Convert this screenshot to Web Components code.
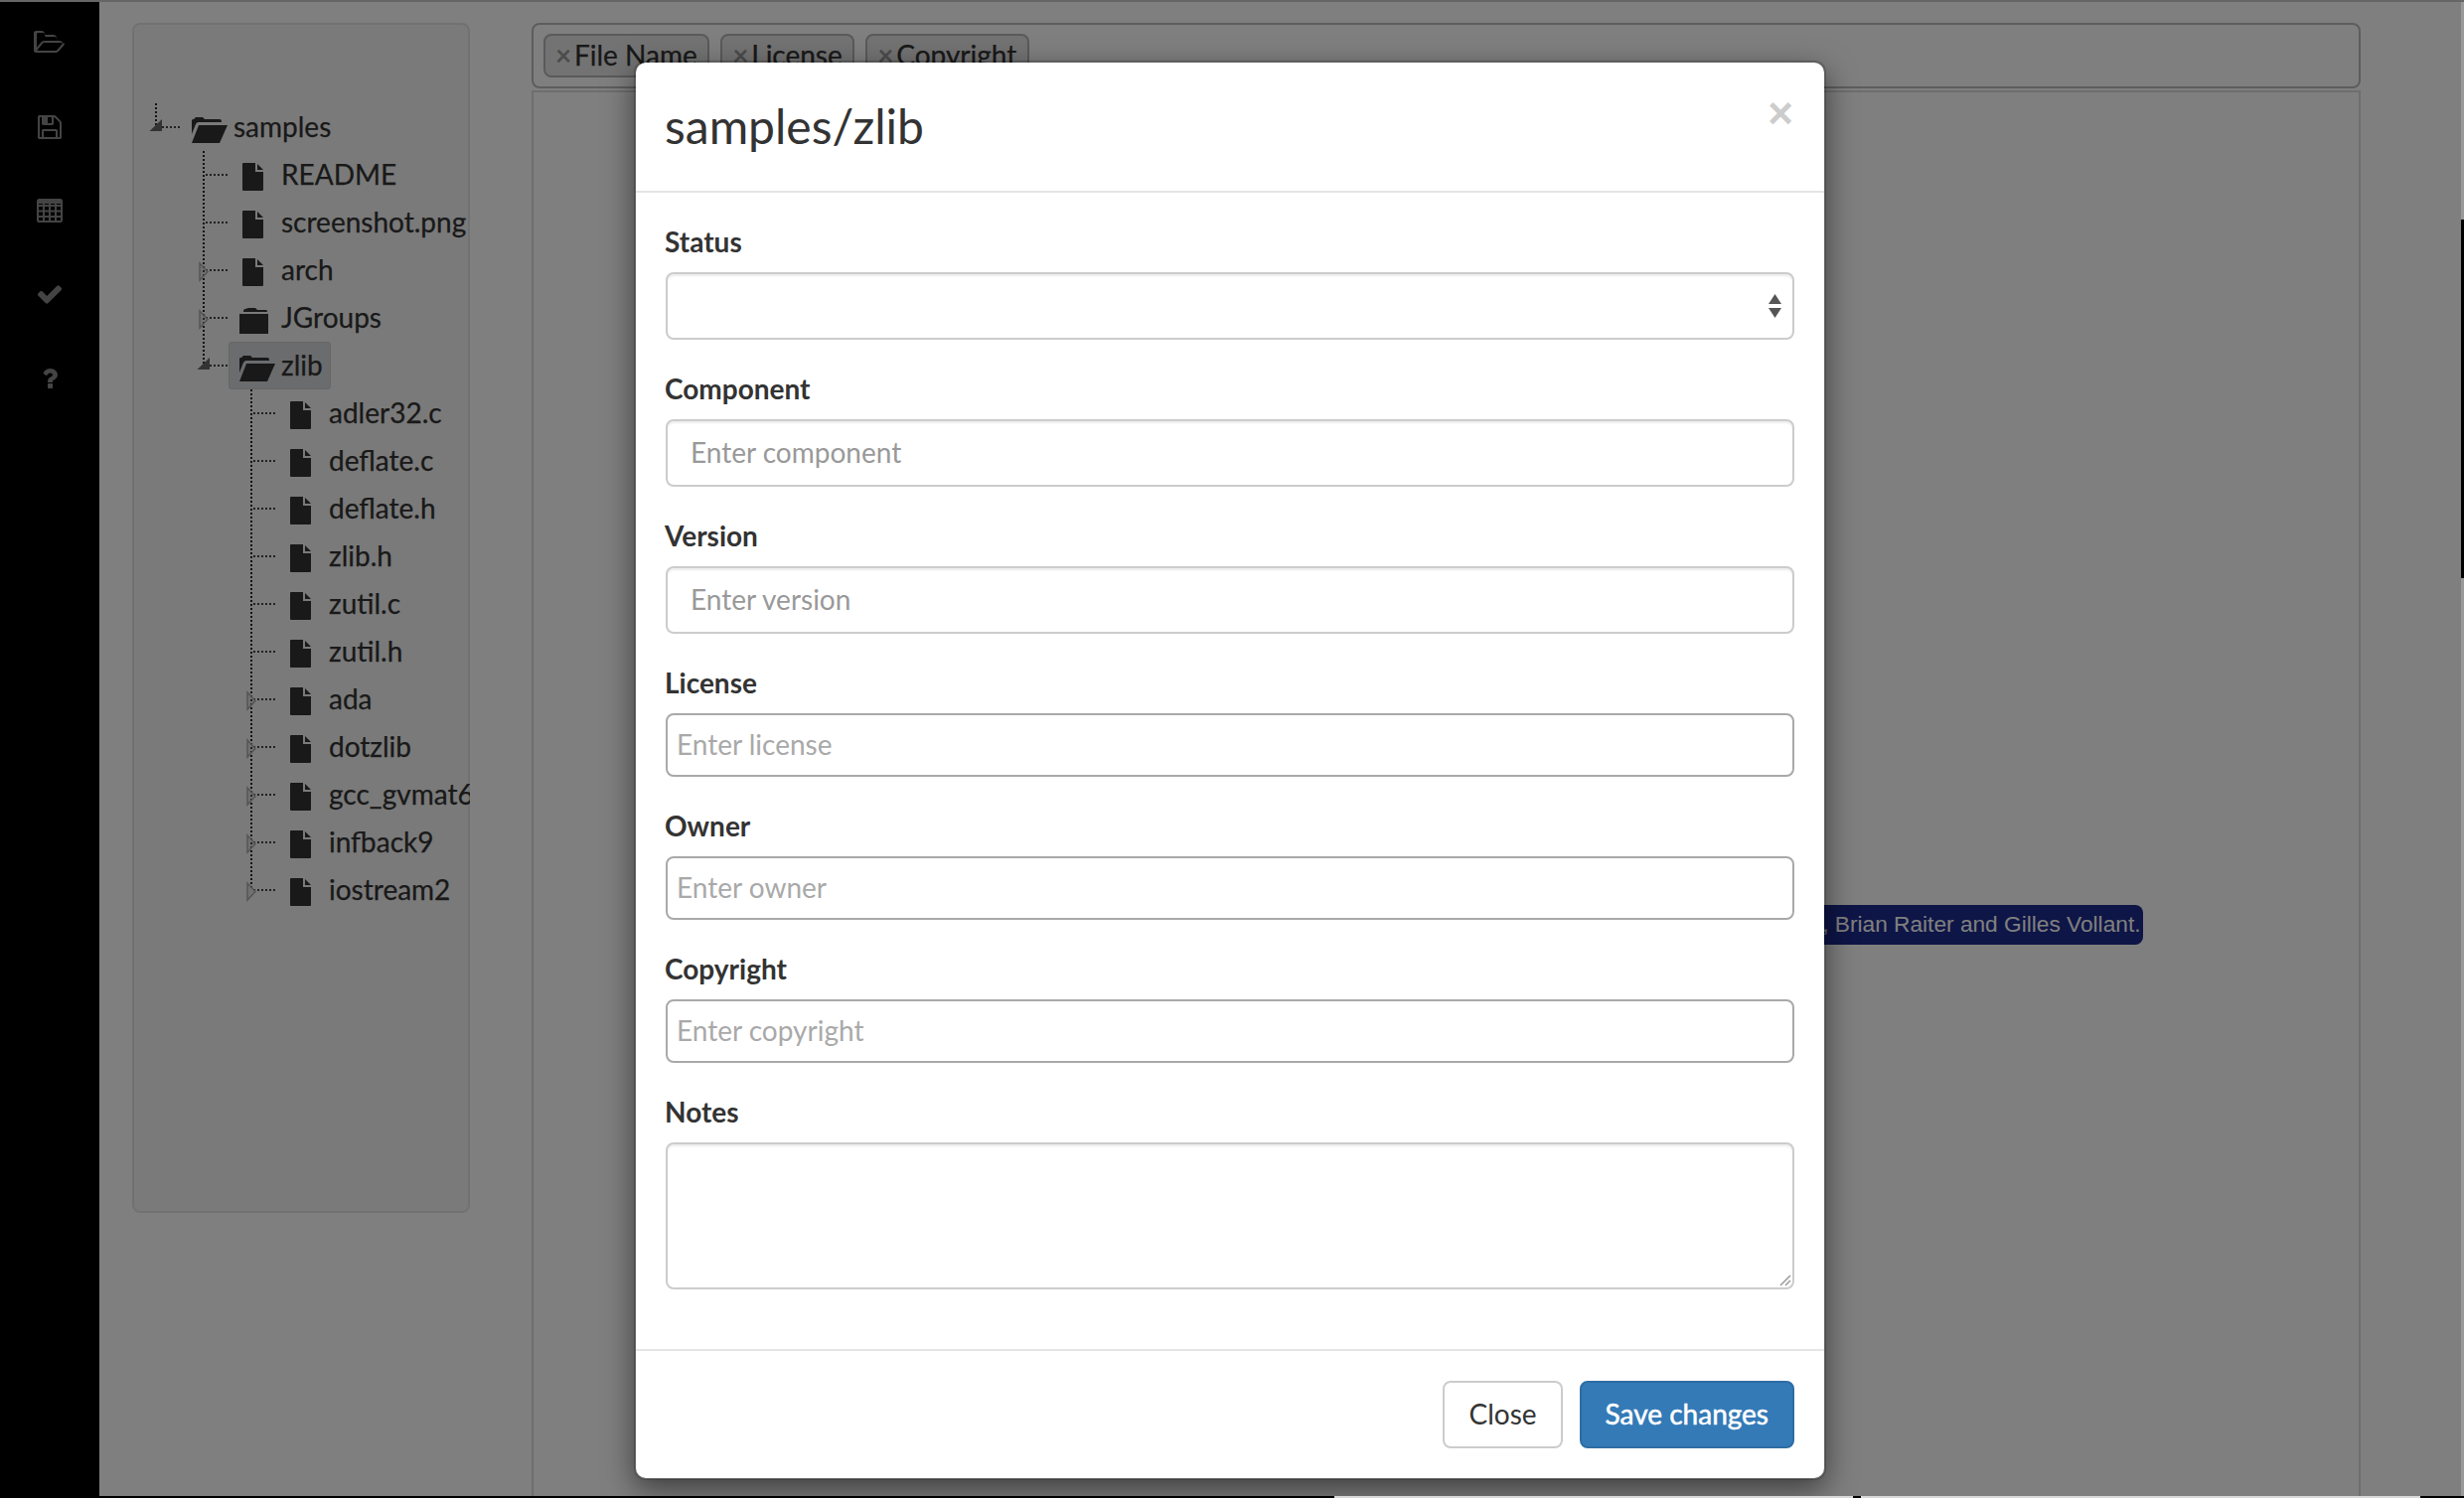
<!DOCTYPE html>
<html>
<head>
<meta charset="utf-8">
<title>samples/zlib</title>
<style>
  html, body { margin: 0; padding: 0; background: #000; overflow: hidden; }
  body { font-family: Lato, "Open Sans", sans-serif; font-size: 28px; color: #333; }
</style>
</head>
<body>
<app-shell>
  <icon-rail slot="rail">
    <rail-icon name="open"></rail-icon>
    <rail-icon name="save"></rail-icon>
    <rail-icon name="table"></rail-icon>
    <rail-icon name="check"></rail-icon>
    <rail-icon name="help"></rail-icon>
  </icon-rail>

  <tree-well slot="tree">
    <tree-node label="samples" icon="open" toggle="open" last root>
      <tree-node label="README" icon="file"></tree-node>
      <tree-node label="screenshot.png" icon="file"></tree-node>
      <tree-node label="arch" icon="file" toggle="closed"></tree-node>
      <tree-node label="JGroups" icon="folder" toggle="closed"></tree-node>
      <tree-node label="zlib" icon="open" toggle="open" last selected>
        <tree-node label="adler32.c" icon="file"></tree-node>
        <tree-node label="deflate.c" icon="file"></tree-node>
        <tree-node label="deflate.h" icon="file"></tree-node>
        <tree-node label="zlib.h" icon="file"></tree-node>
        <tree-node label="zutil.c" icon="file"></tree-node>
        <tree-node label="zutil.h" icon="file"></tree-node>
        <tree-node label="ada" icon="file" toggle="closed"></tree-node>
        <tree-node label="dotzlib" icon="file" toggle="closed"></tree-node>
        <tree-node label="gcc_gvmat64" icon="file" toggle="closed"></tree-node>
        <tree-node label="infback9" icon="file" toggle="closed"></tree-node>
        <tree-node label="iostream2" icon="file" toggle="closed" last></tree-node>
      </tree-node>
    </tree-node>
  </tree-well>

  <main-panel slot="main">
    <tag-bar slot="tags">
      <tag-chip>File Name</tag-chip>
      <tag-chip>License</tag-chip>
      <tag-chip>Copyright</tag-chip>
    </tag-bar>
    <code-chip>Mark Adler, Brian Raiter and Gilles Vollant.</code-chip>
  </main-panel>

  <modal-dialog slot="overlay" heading="samples/zlib">
    <form-field label="Status" kind="select"></form-field>
    <form-field label="Component" placeholder="Enter component"></form-field>
    <form-field label="Version" placeholder="Enter version"></form-field>
    <form-field label="License" placeholder="Enter license" kind="plain"></form-field>
    <form-field label="Owner" placeholder="Enter owner" kind="plain"></form-field>
    <form-field label="Copyright" placeholder="Enter copyright" kind="plain"></form-field>
    <form-field label="Notes" kind="textarea"></form-field>
    <app-button slot="footer">Close</app-button>
    <app-button slot="footer" primary>Save changes</app-button>
  </modal-dialog>
</app-shell>

<script>
class AppShell extends HTMLElement {
  constructor() {
    super();
    this.attachShadow({ mode: 'open' }).innerHTML = `
      <style>
        :host { display: flex; flex-direction: column; width: 2480px; height: 1508px; overflow: hidden; }
        .top { height: 2px; background: #666; flex: none; }
        .row { display: flex; flex: none; height: 1504px; }
        .stage { position: relative; flex: 1; display: flex; overflow: hidden; background: #fff; }
        .backdrop { position: absolute; inset: 0; background: rgba(0,0,0,.5); display: flex; padding: 59px 0 0 638px; box-sizing: border-box; }
        .edge { width: 3px; flex: none; display: flex; flex-direction: column; background: #999; }
        .edge i { display: block; height: 361px; margin-top: 219px; background: #000; }
        .bottom { height: 2px; flex: none; display: flex; background: #000; }
        .bottom i { display: block; height: 2px; background: #d8d8d8; }
      </style>
      <div class="top"></div>
      <div class="row">
        <div class="stage">
          <slot name="rail"></slot>
          <slot name="tree"></slot>
          <slot name="main"></slot>
          <div class="backdrop"><slot name="overlay"></slot></div>
        </div>
        <div class="edge"><i></i></div>
      </div>
      <div class="bottom">
        <i style="width:522px;margin-left:1343px"></i>
        <i style="width:563px;margin-left:8px"></i>
      </div>`;
  }
}

class IconRail extends HTMLElement {
  constructor() {
    super();
    this.attachShadow({ mode: 'open' }).innerHTML = `
      <style>
        :host { display: block; flex: none; width: 100px; background: #000; box-sizing: border-box; }
        .list { display: flex; flex-direction: column; margin-top: -1px; }
      </style>
      <div class="list"><slot></slot></div>`;
  }
}

const RAIL_ICONS = {
  open: '<svg width="32" height="28" viewBox="0 0 2048 1792"><path d="M1845 931q0-35-53-35h-1088q-40 0-85.500 21.500t-71.500 52.500l-294 363q-18 24-18 40 0 35 53 35h1088q40 0 86-22t71-53l294-363q18-22 18-39zm-1141-163h768v-160q0-40-28-68t-68-28h-576q-40 0-68-28t-28-68v-64q0-40-28-68t-68-28h-320q-40 0-68 28t-28 68v853l256-315q44-53 116-87.500t140-34.500zm1280 163q0 62-46 120l-295 363q-43 53-116 87.500t-140 34.500h-1216q-92 0-158-66t-66-158v-960q0-92 66-158t158-66h320q92 0 158 66t66 158v32h544q92 0 158 66t66 158v160h192q54 0 99 24.500t67 70.500q15 32 15 68z"/></svg>',
  save: '<svg width="28" height="28" viewBox="0 0 1792 1792"><path d="M512 1536h768v-384h-768v384zm896 0h128v-896q0-14-10-38.500t-20-34.500l-281-281q-10-10-34-20t-39-10v416q0 40-28 68t-68 28h-576q-40 0-68-28t-28-68v-416h-128v1280h128v-416q0-40 28-68t68-28h832q40 0 68 28t28 68v416zm-384-928v-320q0-13-9.500-22.500t-22.500-9.500h-192q-13 0-22.500 9.500t-9.500 22.500v320q0 13 9.500 22.500t22.500 9.500h192q13 0 22.500-9.500t9.500-22.500zm640 32v928q0 40-28 68t-68 28h-1344q-40 0-68-28t-28-68v-1344q0-40 28-68t68-28h928q40 0 88 20t76 48l280 280q28 28 48 76t20 88z"/></svg>',
  table: '<svg width="26" height="24" viewBox="0 0 26 24" style="fill:none;stroke:#888;stroke-width:2"><rect x="1" y="1" width="24" height="22" rx="1.500"/><path d="M1 7h24M1 12.500h24M1 18h24M7 4v18M13 4v18M19 4v18"/><path d="M1 3.500h24" style="stroke-width:3"/></svg>',
  check: '<svg width="28" height="28" viewBox="0 0 1792 1792"><path d="M1671 566q0 40-28 68l-724 724-136 136q-28 28-68 28t-68-28l-136-136-362-362q-28-28-28-68t28-68l136-136q28-28 68-28t68 28l294 295 656-657q28-28 68-28t68 28l136 136q28 28 28 68z"/></svg>',
  help: '<svg width="16" height="28" viewBox="0 0 1024 1792"><path d="M704 1256v240q0 16-12 28t-28 12h-240q-16 0-28-12t-12-28v-240q0-16 12-28t28-12h240q16 0 28 12t12 28zm316-600q0 54-15.500 101t-35 76.500-55 59.500-57.500 43.500-61 35.500q-41 23-68.500 65t-27.500 67q0 17-12 32.500t-28 15.500h-240q-15 0-25.500-18.500t-10.500-37.500v-45q0-83 65-156.500t143-108.500q59-27 84-56t25-76q0-42-46.500-74t-107.500-32q-65 0-108 29-35 25-107 115-13 16-31 16-12 0-25-8l-164-125q-13-10-15.500-25t5.500-28q160-266 464-266 80 0 161 31t146 83 106 127.500 41 158.500z"/></svg>'
};

class RailIcon extends HTMLElement {
  connectedCallback() {
    if (this.shadowRoot) return;
    this.attachShadow({ mode: 'open' }).innerHTML = `
      <style>
        :host { display: flex; align-items: center; justify-content: center; height: 84.400px; }
        svg { fill: #888; display: block; }
      </style>
      ${RAIL_ICONS[this.getAttribute('name')]}`;
  }
}

class TreeWell extends HTMLElement {
  constructor() {
    super();
    this.attachShadow({ mode: 'open' }).innerHTML = `
      <style>
        :host {
          display: block; flex: none; box-sizing: border-box;
          width: 340px; height: 1198px; margin: 21px 0 0 33px; padding: 79px 0 0 0;
          background: #f5f5f5; border: 2px solid #e3e3e3; border-radius: 8px;
          clip-path: inset(0);
          white-space: nowrap;
        }
      </style>
      <slot></slot>`;
  }
}

const TREE_ICONS = {
  file: '<svg width="21" height="28" viewBox="0 0 21 28" style="margin:4px 0 0 14px"><path d="M1 0H13V9H21V27Q21 28 20 28H1Q0 28 0 27V1Q0 0 1 0Z"/><path d="M15 1L21 7H15Z"/></svg>',
  folder: '<svg width="29" height="26" viewBox="0 0 29 26" style="margin:6px 0 0 11px"><path d="M4 3Q4 1 6 1L9 0H16L18 2H27Q28 2 28 4H4Z"/><path d="M0 6H29V26H0Z"/></svg>',
  open: '<svg width="36" height="26" viewBox="0 0 36 26" style="margin:6px 0 0 11px"><path d="M0 3Q0 2 2 2L4 0H11L13 2H28Q30 2 30 4V5H7Q5 5 4 7L0 17Z"/><path d="M7 8H36L28 26H0Z"/></svg>'
};

class TreeNode extends HTMLElement {
  connectedCallback() {
    if (this.shadowRoot) return;
    const toggle = this.getAttribute('toggle');
    const last = this.hasAttribute('last');
    const mark = toggle === 'open'
      ? '<path d="M28 16V28H15.500Z" fill="#666"/>'
      : toggle === 'closed'
        ? '<path d="M18 17L26 25.500L18 34Z" fill="rgba(170,170,170,.25)" stroke="#aaa" stroke-width="1.500"/>'
        : '';
    const down = last ? 24 : 48;
    this.attachShadow({ mode: 'open' }).innerHTML = `
      <style>
        :host { display: block; }
        .row { display: flex; height: 48px; }
        .gutter { flex: none; width: 47px; height: 48px; display: block; }
        .anchor { display: flex; align-items: center; height: 48px; line-height: 48px; padding-right: 8px; border-radius: 4px; box-sizing: border-box; }
        .anchor.sel { background: #d7d9dc; box-shadow: inset 0 0 0 1px #cbcccd; }
        .icon { flex: none; width: 48px; display: flex; align-items: center; }
        .icon svg { display: block; fill: #333; }
        .text { padding: 0 0 2px 5px; line-height: 46px; color: #333; -webkit-text-stroke: .25px #333; }
        .kids { margin-left: 48px; }
      </style>
      <div class="row">
        <svg class="gutter" viewBox="0 0 47 48" fill="none">
          <path d="M22 0V${down}" stroke="#2a2a2a" stroke-width="2" stroke-dasharray="2 2"/>
          <path d="M${toggle === 'open' ? 28 : 24} 24H47" stroke="#444" stroke-width="2" stroke-dasharray="2 2"/>
          ${mark}
        </svg>
        <div class="anchor${this.hasAttribute('selected') ? ' sel' : ''}">
          <span class="icon">${TREE_ICONS[this.getAttribute('icon')]}</span>
          <span class="text">${this.getAttribute('label')}</span>
        </div>
      </div>
      <div class="kids"><slot></slot></div>`;
  }
}

class MainPanel extends HTMLElement {
  constructor() {
    super();
    this.attachShadow({ mode: 'open' }).innerHTML = `
      <style>
        :host { display: block; flex: none; width: 1841px; margin: 21px 0 0 62px; }
        .body {
          box-sizing: border-box; height: 1420px; margin-top: 2px; background: #fff;
          border: 2px solid #ddd; border-bottom: 0;
          display: flex; justify-content: flex-end;
          padding: 818px 217.500px 0 0; overflow: hidden; white-space: nowrap;
        }
      </style>
      <slot name="tags"></slot>
      <div class="body"><slot></slot></div>`;
  }
}

class TagBar extends HTMLElement {
  constructor() {
    super();
    this.attachShadow({ mode: 'open' }).innerHTML = `
      <style>
        :host {
          display: flex; gap: 11px; box-sizing: border-box; height: 66px; padding: 9px 10px 0;
          background: #fff; border: 2px solid #bbb; border-radius: 8px;
        }
      </style>
      <slot></slot>`;
  }
}

class TagChip extends HTMLElement {
  constructor() {
    super();
    this.attachShadow({ mode: 'open' }).innerHTML = `
      <style>
        :host {
          display: flex; align-items: center; box-sizing: border-box; height: 44px; padding: 0 10.500px 2px 10px;
          background: #e6e6e6; border: 2px solid #b4b4b4; border-radius: 8px;
          font: 28px/38px Lato, sans-serif; color: #333; white-space: nowrap; -webkit-text-stroke: .25px #333;
        }
        .x { color: #999; font-weight: 700; width: 19px; font-size: 28px; -webkit-text-stroke: 0; }
      </style>
      <span class="x">×</span><slot></slot>`;
  }
}

class CodeChip extends HTMLElement {
  constructor() {
    super();
    this.attachShadow({ mode: 'open' }).innerHTML = `
      <style>
        :host {
          display: block; flex: none; height: 40px; padding: 0 2px 0 6px; border-radius: 8px;
          background: #1c2b8e; color: #fff;
          font: 22.700px/38px "Liberation Sans", Arial, sans-serif;
        }
      </style>
      <slot></slot>`;
  }
}

class ModalDialog extends HTMLElement {
  connectedCallback() {
    if (this.shadowRoot) return;
    this.attachShadow({ mode: 'open' }).innerHTML = `
      <style>
        :host {
          display: block; flex: none; box-sizing: border-box; width: 1200px; height: 1429px;
          background: #fff; background-clip: padding-box;
          border: 2px solid rgba(0,0,0,.2); border-radius: 12px;
          box-shadow: 0 10px 30px rgba(0,0,0,.5);
          color: #333;
        }
        header { display: flex; justify-content: space-between; box-sizing: border-box; height: 131px; padding: 30px; border-bottom: 2px solid #e5e5e5; }
        h4 { margin: 0 0 0 -1px; font: 400 48px/68px Lato, sans-serif; }
        .close { font: 700 44px/42px "Liberation Sans", Arial, sans-serif; color: #ccc; margin: 0 1px 0 0; }
        .body { box-sizing: border-box; height: 1164px; padding: 30px; }
        footer { display: flex; justify-content: flex-end; gap: 17px; padding: 30px; border-top: 2px solid #e5e5e5; }
      </style>
      <header><h4>${this.getAttribute('heading')}</h4><span class="close">×</span></header>
      <div class="body"><slot></slot></div>
      <footer><slot name="footer"></slot></footer>`;
  }
}

class FormField extends HTMLElement {
  connectedCallback() {
    if (this.shadowRoot) return;
    const kind = this.getAttribute('kind') || 'input';
    const placeholder = this.getAttribute('placeholder') || '';
    const arrows = kind === 'select'
      ? '<svg class="arrows" width="13" height="24" viewBox="0 0 13 24"><path d="M6.500 0L13 10H0Z"/><path d="M0 14H13L6.500 24Z"/></svg>'
      : '';
    const grip = kind === 'textarea'
      ? '<svg class="grip" width="12" height="12" viewBox="0 0 12 12"><path d="M1 11L11 1M6 11L11 6" stroke="#999" stroke-width="1.500"/></svg>'
      : '';
    this.attachShadow({ mode: 'open' }).innerHTML = `
      <style>
        :host { display: block; margin-bottom: 30px; }
        label { display: block; font: 700 28px/38px Lato, sans-serif; margin: 0 0 12px -1px; color: #333; }
        .control {
          position: relative; display: flex; align-items: center; box-sizing: border-box;
          height: 68px; padding: 0 23px; background: #fff; font: 28px/38px Lato, sans-serif;
          border: 2px solid #ccc; border-radius: 8px;
          box-shadow: inset 0 2px 2px rgba(0,0,0,.075);
        }
        .control.plain { height: 64px; padding: 0 9px; border-color: #a9a9a9; box-shadow: none; }
        .control.textarea { height: 148px; }
        .control.select { justify-content: flex-end; padding: 0 11px 0 0; }
        .ph { color: #999; padding-bottom: 2px; }
        .plain .ph { color: #a9a9a9; }
        .arrows { display: block; fill: #555; }
        .grip { position: absolute; right: 1px; bottom: 1px; }
      </style>
      <label>${this.getAttribute('label')}</label>
      <div class="control ${kind}">${placeholder ? `<span class="ph">${placeholder}</span>` : ''}${arrows}${grip}</div>`;
  }
}

class AppButton extends HTMLElement {
  connectedCallback() {
    if (this.shadowRoot) return;
    const primary = this.hasAttribute('primary');
    this.attachShadow({ mode: 'open' }).innerHTML = `
      <style>
        :host {
          display: block; box-sizing: border-box; height: 68px; padding: 0 24px;
          font: 28px/62px Lato, sans-serif; white-space: nowrap; border-radius: 8px;
          border: 2px solid ${primary ? '#2e6da4' : '#ccc'};
          background: ${primary ? '#337ab7' : '#fff'};
          color: ${primary ? '#fff' : '#333'};
          -webkit-text-stroke: ${primary ? '.5px #fff' : '0'};
        }
      </style>
      <slot></slot>`;
  }
}

customElements.define('app-shell', AppShell);
customElements.define('icon-rail', IconRail);
customElements.define('rail-icon', RailIcon);
customElements.define('tree-well', TreeWell);
customElements.define('tree-node', TreeNode);
customElements.define('main-panel', MainPanel);
customElements.define('tag-bar', TagBar);
customElements.define('tag-chip', TagChip);
customElements.define('code-chip', CodeChip);
customElements.define('modal-dialog', ModalDialog);
customElements.define('form-field', FormField);
customElements.define('app-button', AppButton);
</script>
</body>
</html>
